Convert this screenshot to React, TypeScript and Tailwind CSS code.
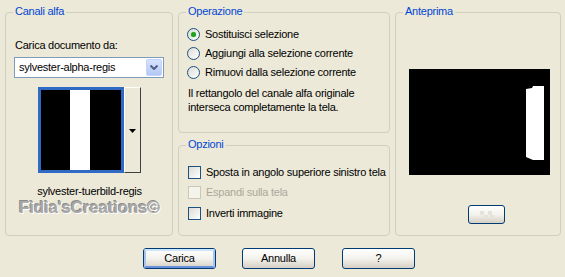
import React from 'react';

// XP-style group box with a title sitting on the top border
function Group({ title, className, children }: { title: string; className?: string; children?: React.ReactNode }) {
    return (
        <div className={`relative border border-[#D0D0BF] rounded-[4px] ${className ?? ''}`}>
            <span className="absolute left-[7px] top-[-8px] px-[2px] bg-[#ECE9D8] text-[#0046D5] leading-[13px]">
                {title}
            </span>
            {children}
        </div>
    );
}

function Radio({ label, checked }: { label: string; checked?: boolean }) {
    return (
        <div className="flex items-center h-[19px]">
            <span className="w-[13px] h-[13px] rounded-full border border-[#1C5180] bg-gradient-to-br from-[#DCDBD5] to-[#FFFFFF] flex items-center justify-center">
                {checked && <span className="w-[5px] h-[5px] rounded-full bg-[#21A121] shadow-[0_0_1px_#5ec85e]" />}
            </span>
            <span className="ml-[5px] leading-[13px]">{label}</span>
        </div>
    );
}

function Check({ label, disabled }: { label: string; disabled?: boolean }) {
    return (
        <div className="flex items-center h-[20.5px]">
            <span
                className={
                    disabled
                        ? "w-[13px] h-[13px] border border-[#CAC8BB] bg-[#F5F4EA]"
                        : "w-[13px] h-[13px] border border-[#1C5180] bg-gradient-to-br from-[#DCDBD5] to-[#FFFFFF]"
                }
            />
            <span className={`ml-[5px] leading-[13px] ${disabled ? 'text-[#ACA899]' : ''}`}>{label}</span>
        </div>
    );
}

function XpButton({ label, isDefault, className }: { label: string; isDefault?: boolean; className?: string }) {
    return (
        <div className={`h-[21px] w-[73px] rounded-[3px] border border-[#003C74] bg-gradient-to-b from-[#FFFFFF] via-[#F3F2EC] to-[#D6D0C5] flex items-center justify-center ${className ?? ''}`}>
            <div
                className={`w-full h-full rounded-[2px] flex items-center justify-center leading-[13px] ${
                    isDefault ? 'border-2 border-[#A9C4F0] border-t-[#CEE7FF] border-b-[#6A8FDB]' : ''
                }`}
            >
                {label}
            </div>
        </div>
    );
}

export default function App() {
    return (
        <div className="w-[565px] h-[277px] bg-[#ECE9D8] text-black text-[11px] font-['Liberation_Sans',Arial,sans-serif] tracking-[-0.25px] overflow-hidden">
            <div className="flex pt-[12px] pl-[5px] gap-[5px]">
                {/* Canali alfa */}
                <Group title="Canali alfa" className="w-[168px] h-[224px]">
                    <div className="flex flex-col pt-[26px] pl-[8px]">
                        <span className="ml-[1px] leading-[13px]">Carica documento da:</span>
                        <div className="mt-[5px] w-[150px] h-[21px] border border-[#7F9DB9] bg-white flex items-center">
                            <span className="flex-1 pl-[4px] leading-[13px]">sylvester-alpha-regis</span>
                            <span className="mr-[1px] w-[16px] h-[17px] rounded-[2px] bg-gradient-to-b from-[#D6E2FD] to-[#B4C8F6] border border-[#C3D3FD] flex items-center justify-center">
                                <svg width="8" height="5" viewBox="0 0 8 5">
                                    <path d="M0.5 0.5 L4 4 L7.5 0.5" stroke="#4D6185" strokeWidth="2" fill="none" />
                                </svg>
                            </span>
                        </div>
                        <div className="mt-[9px] ml-[24px] flex">
                            <div className="w-[86px] h-[86px] border-[3px] border-[#316AC5] bg-black flex">
                                <div className="ml-[29px] w-[20px] h-full bg-white" />
                            </div>
                            <div className="w-[17px] h-[86px] border border-[#FFFFFF] border-r-[#404040] border-b-[#404040] bg-[#ECE9D8] flex items-center justify-center">
                                <svg width="7" height="4" viewBox="0 0 7 4" className="mt-[2px]">
                                    <path d="M0 0 H7 L3.5 4 Z" fill="#000" />
                                </svg>
                            </div>
                        </div>
                        <div className="mt-[12px] ml-[24px] w-[103px] flex justify-center whitespace-nowrap leading-[13px]">
                            sylvester-tuerbild-regis
                        </div>
                        <span className="ml-[5px] mt-[1px] whitespace-nowrap text-[17px] leading-[18px] font-bold tracking-[-0.2px] text-[#A7A7A7] [text-shadow:1px_1px_0_#ffffff,-1px_-1px_0_#8c8c8c]">
                            Fidia'sCreations©
                        </span>
                    </div>
                </Group>

                {/* Operazione + Opzioni */}
                <div className="flex flex-col w-[212px] gap-[12px]">
                    <Group title="Operazione" className="h-[121px]">
                        <div className="flex flex-col pt-[12px] pl-[8px]">
                            <Radio label="Sostituisci selezione" checked />
                            <Radio label="Aggiungi alla selezione corrente" />
                            <Radio label="Rimuovi dalla selezione corrente" />
                            <p className="mt-[4px] ml-[1px] leading-[14px]">
                                Il rettangolo del canale alfa originale
                                <br />
                                interseca completamente la tela.
                            </p>
                        </div>
                    </Group>
                    <Group title="Opzioni" className="h-[91px]">
                        <div className="flex flex-col pt-[16px] pl-[9px]">
                            <Check label="Sposta in angolo superiore sinistro tela" />
                            <Check label="Espandi sulla tela" disabled />
                            <Check label="Inverti immagine" />
                        </div>
                    </Group>
                </div>

                {/* Anteprima */}
                <Group title="Anteprima" className="w-[166px] h-[224px]">
                    <div className="flex flex-col pt-[56px] pl-[13px]">
                        <div className="w-[141px] h-[106px] bg-black">
                            <svg width="141" height="106" viewBox="0 0 141 106">
                                <polygon points="117,20 123,19 124,17 135,17 135,91 124,91 117,88" fill="#fff" />
                            </svg>
                        </div>
                        <div className="mt-[30px] ml-[59px] w-[37px] h-[19px] rounded-[3px] border border-[#003C74] bg-gradient-to-b from-[#FFFFFF] via-[#F3F2EC] to-[#D6D0C5] flex items-center justify-center">
                            <svg width="14" height="8" viewBox="0 0 14 8">
                                <rect x="0" y="0" width="4" height="4" fill="#E4E2DA" />
                                <rect x="8" y="0" width="4" height="4" fill="#E4E2DA" />
                                <rect x="4" y="4" width="4" height="4" fill="#E4E2DA" />
                                <rect x="10" y="4" width="4" height="4" fill="#E4E2DA" />
                            </svg>
                        </div>
                    </div>
                </Group>
            </div>

            <div className="flex mt-[12px] pl-[143px]">
                <XpButton label="Carica" isDefault />
                <XpButton label="Annulla" className="ml-[26px]" />
                <XpButton label="?" className="ml-[27px]" />
            </div>
        </div>
    );
}
